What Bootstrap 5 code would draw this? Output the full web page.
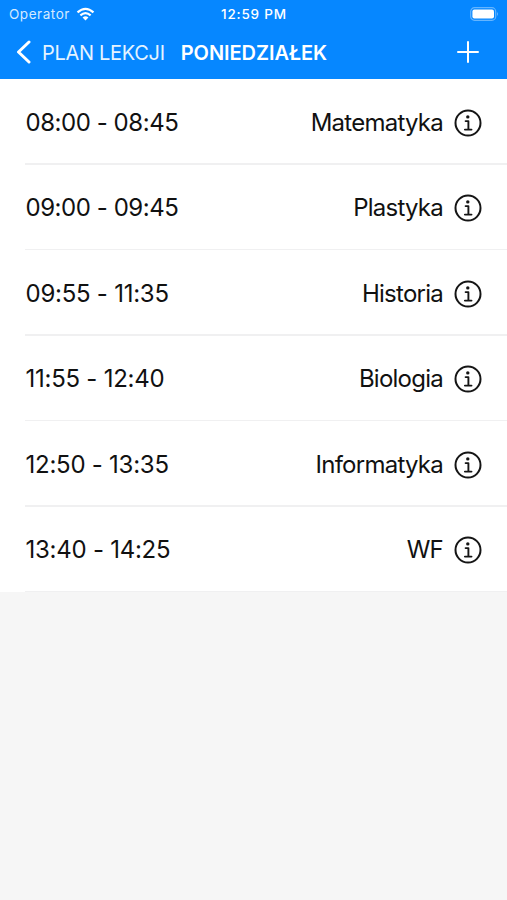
<!DOCTYPE html>
<html lang="pl">
<head>
<meta charset="utf-8">
<meta name="viewport" content="width=device-width, initial-scale=1">
<title>Plan lekcji</title>
<link href="https://cdn.jsdelivr.net/npm/bootstrap@5.3.0/dist/css/bootstrap.min.css" rel="stylesheet">
<style>
body{font-family:Inter,"Liberation Sans",sans-serif;background:#f6f6f6;color:#111;height:900px;overflow:hidden}
.top-area{background:#0687ff;height:79px}
.status-bar{height:27px;padding:1px 8px 0 9px;font-size:13px;line-height:26px}
.status-bar>*{flex:1 1 0}
.carrier{color:#d3eaff;font-size:13.5px;letter-spacing:.55px}
.signal{margin-left:6px}
.clock{letter-spacing:.8px;font-size:13.5px;font-weight:500}
.title-bar{height:50px;padding:0 28px 0 16px;font-size:20px}
.back-link{color:#e4f3ff;letter-spacing:-.3px;margin-right:16px}
.back-link svg{margin-right:10px}
.back-label,.day-title{padding-top:1px}
.day-title{font-size:20px;font-weight:600;letter-spacing:-.05px}
.lesson-list{--bs-list-group-bg:#fff;--bs-list-group-color:#111}
.lesson{height:85.5px;padding:1.5px 25px 0 25.5px;font-size:24px;background:#fff}
.lesson::after{content:"";position:absolute;left:25px;right:0;bottom:0;height:1.5px;background:#f0f0f1}
.hours{letter-spacing:-.45px}
.hours-fit{letter-spacing:-.25px}
.subject{letter-spacing:-.75px;margin-right:11px}
</style>
<script src="https://cdn.jsdelivr.net/npm/bootstrap@5.3.0/dist/js/bootstrap.bundle.min.js" defer></script>
</head>
<body>
<svg class="d-none"><symbol id="info" viewBox="0 0 28 28"><circle cx="14" cy="14" r="12.5" fill="none" stroke="#151515" stroke-width="2"/><circle cx="13.8" cy="7.9" r="1.7" fill="#151515"/><path d="M11.6 12.1H14.4V20.4M10.9 20.6H17.5" fill="none" stroke="#151515" stroke-width="1.9" stroke-linecap="round" stroke-linejoin="round"/></symbol></svg>
<header class="top-area text-white">
  <div class="status-bar d-flex align-items-center">
    <div class="d-flex align-items-center"><span class="carrier">Operator</span>
      <svg class="signal" width="19" height="15" viewBox="0 0 20 15" fill="none" stroke="#fff" stroke-width="2.3"><path d="M1.6 5.3Q10-2.3 18.4 5.3M4.6 8.4Q10 3.6 15.4 8.4"/><path d="M10 13.8L6.9 10.6Q10 8 13.1 10.6Z" fill="#fff" stroke="none"/></svg>
    </div>
    <div class="clock text-center">12:59 PM</div>
    <div class="d-flex justify-content-end"><svg width="29" height="14" viewBox="0 0 29 14"><rect x=".7" y=".7" width="25" height="12.6" rx="3.8" fill="none" stroke="#65b5ff" stroke-width="1.2"/><rect x="2.4" y="2.4" width="21.6" height="9.2" rx="2" fill="#fff"/><path d="M27 5Q29 7 27 9Z" fill="#65b5ff"/></svg></div>
  </div>
  <nav class="title-bar d-flex align-items-center">
    <a class="back-link d-flex align-items-center text-decoration-none" href="#"><svg width="16" height="24" viewBox="0 0 16 24" fill="none" stroke="#fff" stroke-width="3" stroke-linecap="round" stroke-linejoin="round"><path d="M13 2L2.5 12L13 22"/></svg><span class="back-label">PLAN LEKCJI</span></a>
    <h1 class="day-title mb-0">PONIEDZIAŁEK</h1>
    <svg class="ms-auto" width="22" height="22" viewBox="0 0 22 22" stroke="#fff" stroke-width="2" stroke-linecap="round"><path d="M11 1V21M1 11H21"/></svg>
  </nav>
</header>
<main class="list-group list-group-flush rounded-0 lesson-list">
  <div class="lesson position-relative d-flex align-items-center"><span class="hours">08:00 - 08:45</span><span class="subject ms-auto">Matematyka</span><svg width="28" height="28"><use href="#info"/></svg></div>
  <div class="lesson position-relative d-flex align-items-center"><span class="hours">09:00 - 09:45</span><span class="subject ms-auto">Plastyka</span><svg width="28" height="28"><use href="#info"/></svg></div>
  <div class="lesson position-relative d-flex align-items-center"><span class="hours hours-fit">09:55 - 11:35</span><span class="subject ms-auto">Historia</span><svg width="28" height="28"><use href="#info"/></svg></div>
  <div class="lesson position-relative d-flex align-items-center"><span class="hours hours-fit">11:55 - 12:40</span><span class="subject ms-auto">Biologia</span><svg width="28" height="28"><use href="#info"/></svg></div>
  <div class="lesson position-relative d-flex align-items-center"><span class="hours hours-fit">12:50 - 13:35</span><span class="subject ms-auto">Informatyka</span><svg width="28" height="28"><use href="#info"/></svg></div>
  <div class="lesson position-relative d-flex align-items-center"><span class="hours hours-fit">13:40 - 14:25</span><span class="subject ms-auto">WF</span><svg width="28" height="28"><use href="#info"/></svg></div>
</main>
</body>
</html>
